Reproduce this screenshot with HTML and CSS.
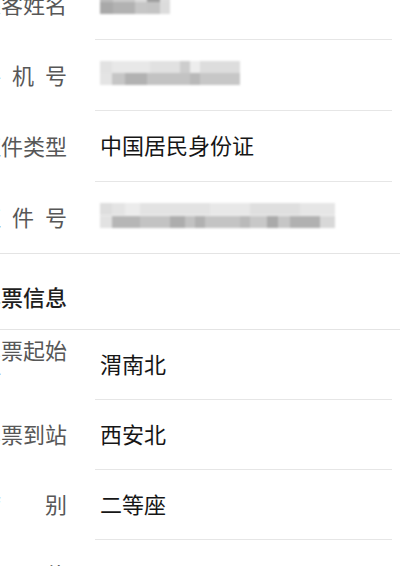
FILE: index.html
```html
<!DOCTYPE html>
<html lang="zh-CN">
<head>
<meta charset="utf-8">
<title>乘车信息</title>
<link rel="stylesheet" href="styles.css">
</head>
<body>
<div class="page">
  <section class="section section-first">
    <div class="row row-tall">
      <div class="label">乘客姓名</div>
      <div class="value"><div class="blur blur-name"></div></div>
    </div>
    <div class="row row-tall">
      <div class="label">手 机 号</div>
      <div class="value"><div class="blur blur-phone"></div></div>
    </div>
    <div class="row row-tall">
      <div class="label">证件类型</div>
      <div class="value">中国居民身份证</div>
    </div>
    <div class="row row-tall">
      <div class="label">证 件 号</div>
      <div class="value value-last"><div class="blur blur-id"></div></div>
    </div>
  </section>
  <div class="header">车票信息</div>
  <section class="section">
    <div class="row">
      <div class="label">车票起始站</div>
      <div class="value">渭南北</div>
    </div>
    <div class="row">
      <div class="label">车票到站</div>
      <div class="value">西安北</div>
    </div>
    <div class="row">
      <div class="label">席 别</div>
      <div class="value">二等座</div>
    </div>
    <div class="row">
      <div class="label">票 价</div>
      <div class="value">¥24.5</div>
    </div>
  </section>
</div>
</body>
</html>
```

FILE: styles.css
```css
html, body {
  margin: 0;
  padding: 0;
  background: #ffffff;
  overflow: hidden;
}

body {
  width: 400px;
  height: 566px;
  font-family: "Noto Sans CJK SC", "Noto Sans", sans-serif;
  font-size: 22px;
}

.page {
  margin-left: -21px;
  margin-top: -31px;
}

.section-first {
  border-bottom: 1px solid #e4e4e4;
}

.row {
  display: flex;
  height: 70px;
  box-sizing: border-box;
}

.row-tall {
  height: 71px;
}

.label {
  flex: none;
  width: 88px;
  align-self: center;
  margin-bottom: 4px;
  line-height: 28px;
  color: #575757;
  text-align: justify;
  text-align-last: justify;
}

.value {
  flex: 1;
  margin-left: 28px;
  margin-right: 8px;
  padding-left: 5px;
  padding-bottom: 4px;
  display: flex;
  align-items: center;
  color: #161616;
  border-bottom: 1px solid #e6e6e6;
}

.value-last {
  border-bottom: none;
}

.header {
  height: 76px;
  box-sizing: border-box;
  padding-top: 8px;
  display: flex;
  align-items: center;
  color: #1e1e1e;
  font-weight: 500;
  border-bottom: 1px solid #e4e4e4;
}

.blur {
  height: 24px;
  filter: blur(1.2px);
}

.blur-name {
  width: 70px;
  background:
    linear-gradient(to right, #bdbdbd 0 13px, #cbcbcb 13px 35px, #dddddd 35px 47px, #9e9e9e 47px 60px, #dedede 60px 70px) top / 100% 50% no-repeat,
    linear-gradient(to right, #a9a9a9 0 13px, #b2b2b2 13px 35px, #c6c6c6 35px 47px, #c4c4c4 47px 60px, #dcdcdc 60px 70px) bottom / 100% 50% no-repeat;
}

.blur-phone {
  width: 140px;
  background:
    linear-gradient(to right, #e2e2e2 0 12px, #e8e8e8 12px 50px, #e1e1e1 50px 80px, #cdcdcd 80px 90px, #ededed 90px 100px, #dddddd 100px 140px) top / 100% 50% no-repeat,
    linear-gradient(to right, #e4e4e4 0 12px, #c6c6c6 12px 25px, #b2b2b2 25px 47px, #c3c3c3 47px 90px, #b9b9b9 90px 100px, #c7c7c7 100px 140px) bottom / 100% 50% no-repeat;
}

.blur-id {
  width: 235px;
  height: 25px;
  background:
    linear-gradient(to right, #dedede 0 12px, #e4e4e4 12px 25px, #ececec 25px 40px, #e3e3e3 40px 110px, #e8e8e8 110px 150px, #dfdfdf 150px 200px, #e6e6e6 200px 235px) top / 100% 50% no-repeat,
    linear-gradient(to right, #e2e2e2 0 12px, #b6b6b6 12px 40px, #c3c3c3 40px 70px, #adadad 70px 85px, #c2c2c2 85px 95px, #b1b1b1 95px 105px, #c4c4c4 105px 140px, #bababa 140px 150px, #c8c8c8 150px 167px, #aaaaaa 167px 178px, #c6c6c6 178px 190px, #b1b1b1 190px 220px, #d8d8d8 220px 235px) bottom / 100% 50% no-repeat;
}
```
